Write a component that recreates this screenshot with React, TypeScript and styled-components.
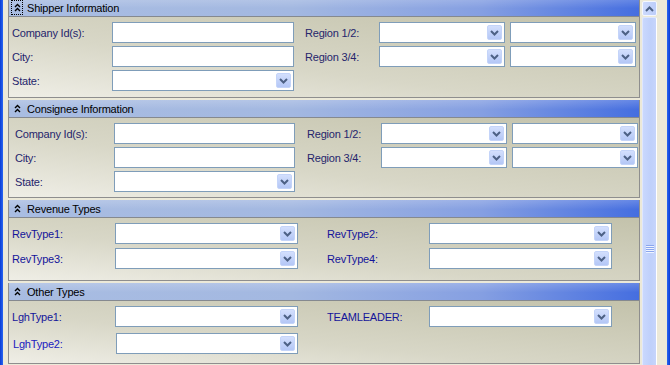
import React from "react";
import styled, { createGlobalStyle } from "styled-components";

const GlobalStyle = createGlobalStyle`
  html, body {
    margin: 0;
    padding: 0;
    background: #ece9d8;
  }
  body {
    font-family: "Liberation Sans", Arial, sans-serif;
  }
`;

const Window = styled.div`
  width: 670px;
  height: 365px;
  overflow: hidden;
  display: flex;
  align-items: flex-start;
  background: #ece9d8;
`;

const FrameEdge = styled.div<{ $side: "left" | "right" }>`
  width: 3px;
  height: 365px;
  flex: none;
  margin-left: ${(p) => (p.$side === "right" ? "auto" : "0")};
  background: ${(p) =>
    p.$side === "left"
      ? "linear-gradient(to right, #0a3cd4, #2a66f2)"
      : "linear-gradient(to right, #2a66f2, #0a3cd4)"};
`;

const Panels = styled.div`
  width: 632px;
  margin-left: 5px;
  flex: none;
  display: flex;
  flex-direction: column;
`;

const SectionBox = styled.section`
  box-sizing: border-box;
  border: 1px solid #8e8e8e;
  border-top: none;
  margin-bottom: 2px;

  &:first-child {
    margin-top: -1px;
  }
`;

const SectionHeader = styled.div`
  height: 18px;
  box-sizing: border-box;
  border-bottom: 1px solid #85898f;
  display: flex;
  align-items: center;
  padding-left: 2px;
  font-size: 11px;
  letter-spacing: -0.2px;
  color: #000;
  background: linear-gradient(
      to bottom,
      rgba(255, 255, 255, 0.18) 0%,
      rgba(255, 255, 255, 0) 55%
    ),
    linear-gradient(
      to right,
      #a9bde2 0%,
      #a3b8e1 45%,
      #859fe2 75%,
      #456ee0 100%
    );
`;

const Toggle = styled.span<{ $focused?: boolean }>`
  width: 12px;
  height: 15px;
  box-sizing: border-box;
  border: 1px dotted ${(p) => (p.$focused ? "#000" : "transparent")};
  display: flex;
  align-items: center;
  justify-content: center;
  margin-right: 4px;
`;

const SectionBody = styled.div<{ $height: number }>`
  height: ${(p) => p.$height}px;
  box-sizing: border-box;
  padding-top: 5px;
  display: flex;
  align-items: flex-start;
  background: linear-gradient(
    to top right,
    #efeee6 0%,
    #d8d7c7 40%,
    #c3c2ab 100%
  );
`;

const FieldGrid = styled.div<{ $cols: string; $rowGap: number; $offset: number }>`
  display: grid;
  grid-template-columns: ${(p) => p.$cols};
  grid-auto-rows: 21px;
  column-gap: 5px;
  row-gap: ${(p) => p.$rowGap}px;
  margin-left: ${(p) => p.$offset}px;
`;

type Tone = "navy" | "blue" | "bright";

const toneColor: Record<Tone, string> = {
  navy: "#25256c",
  blue: "#14149a",
  bright: "#2020c0",
};

const Label = styled.label<{ $tone: Tone; $nudge?: number }>`
  display: flex;
  align-items: center;
  white-space: nowrap;
  font-size: 11px;
  letter-spacing: -0.2px;
  color: ${(p) => toneColor[p.$tone]};
  padding-left: ${(p) => p.$nudge ?? 0}px;
`;

const TextBox = styled.div`
  box-sizing: border-box;
  height: 21px;
  border: 1px solid #7f9db9;
  background: #fff;
`;

const Combo = styled.div<{ $nudge?: number }>`
  box-sizing: border-box;
  height: 21px;
  border: 1px solid #7f9db9;
  background: #fff;
  display: flex;
  align-items: center;
  justify-content: flex-end;
  padding-right: 2px;
  margin-left: ${(p) => p.$nudge ?? 0}px;
`;

const DropButton = styled.span`
  width: 15px;
  height: 15px;
  box-sizing: border-box;
  border: 1px solid #c4d4f9;
  border-radius: 2px;
  background: linear-gradient(to bottom, #d3dffd, #b4c7f6);
  display: flex;
  align-items: center;
  justify-content: center;
`;

const ScrollBar = styled.div`
  width: 15px;
  flex: none;
  margin-left: 2px;
  padding-top: 1px;
  display: flex;
  flex-direction: column;
  gap: 1px;
`;

const ScrollButton = styled.div`
  height: 15px;
  box-sizing: border-box;
  border: 1px solid #f4f7ff;
  border-radius: 2px;
  background: linear-gradient(to right, #cddafd, #bccdfa);
  display: flex;
  align-items: center;
  justify-content: center;
`;

const Thumb = styled.div`
  height: 464px;
  box-sizing: border-box;
  border: 1px solid #dfe7fe;
  border-right-color: #ffffff;
  border-radius: 2px;
  background: linear-gradient(to right, #c9d8fd, #bfd0fb 60%, #c6d5fc);
  display: flex;
  align-items: center;
  justify-content: center;
`;

const Grip = styled.span`
  width: 8px;
  height: 8px;
  background: repeating-linear-gradient(
    to bottom,
    #8ba6ee 0,
    #8ba6ee 1px,
    #eef3ff 1px,
    #eef3ff 2px
  );
`;

const Chevron = ({ up }: { up?: boolean }) => (
  <svg width="9" height="6" viewBox="0 0 9 6">
    <polyline
      points={up ? "1,5 4.5,1.5 8,5" : "1,1 4.5,4.5 8,1"}
      fill="none"
      stroke="#4d6185"
      strokeWidth="2"
    />
  </svg>
);

const CollapseIcon = () => (
  <svg width="7" height="9" viewBox="0 0 7 9">
    <polyline points="1,4 3.5,1.5 6,4" fill="none" stroke="#000" strokeWidth="1.4" />
    <polyline points="1,8 3.5,5.5 6,8" fill="none" stroke="#000" strokeWidth="1.4" />
  </svg>
);

type Field = "text" | "combo";
type Row = { label: string; fields: Field[]; tone?: Tone; nudge?: number };
type Group = { offset: number; cols: string; rows: Row[] };
type Section = {
  title: string;
  focused?: boolean;
  height: number;
  rowGap: number;
  tone: Tone;
  groups: Group[];
};

const sections: Section[] = [
  {
    title: "Shipper Information",
    focused: true,
    height: 80,
    rowGap: 3,
    tone: "navy",
    groups: [
      {
        offset: 3,
        cols: "95px 182px",
        rows: [
          { label: "Company Id(s):", fields: ["text"] },
          { label: "City:", fields: ["text"] },
          { label: "State:", fields: ["combo"] },
        ],
      },
      {
        offset: 11,
        cols: "69px 126px 126px",
        rows: [
          { label: "Region 1/2:", fields: ["combo", "combo"] },
          { label: "Region 3/4:", fields: ["combo", "combo"] },
        ],
      },
    ],
  },
  {
    title: "Consignee Information",
    height: 79,
    rowGap: 3,
    tone: "navy",
    groups: [
      {
        offset: 6,
        cols: "94px 181px",
        rows: [
          { label: "Company Id(s):", fields: ["text"] },
          { label: "City:", fields: ["text"] },
          { label: "State:", fields: ["combo"] },
        ],
      },
      {
        offset: 12,
        cols: "69px 126px 126px",
        rows: [
          { label: "Region 1/2:", fields: ["combo", "combo"] },
          { label: "Region 3/4:", fields: ["combo", "combo"] },
        ],
      },
    ],
  },
  {
    title: "Revenue Types",
    height: 62,
    rowGap: 4,
    tone: "blue",
    groups: [
      {
        offset: 3,
        cols: "98px 183px",
        rows: [
          { label: "RevType1:", fields: ["combo"] },
          { label: "RevType3:", fields: ["combo"] },
        ],
      },
      {
        offset: 29,
        cols: "97px 183px",
        rows: [
          { label: "RevType2:", fields: ["combo"] },
          { label: "RevType4:", fields: ["combo"] },
        ],
      },
    ],
  },
  {
    title: "Other Types",
    height: 62,
    rowGap: 6,
    tone: "blue",
    groups: [
      {
        offset: 3,
        cols: "98px 183px",
        rows: [
          { label: "LghType1:", fields: ["combo"] },
          { label: "LghType2:", fields: ["combo"], tone: "bright", nudge: 1 },
        ],
      },
      {
        offset: 29,
        cols: "97px 183px",
        rows: [{ label: "TEAMLEADER:", fields: ["combo"] }],
      },
    ],
  },
];

function FieldBox({ kind, nudge }: { kind: Field; nudge?: number }) {
  if (kind === "text") return <TextBox />;
  return (
    <Combo $nudge={nudge}>
      <DropButton>
        <Chevron />
      </DropButton>
    </Combo>
  );
}

function FormSection({ section }: { section: Section }) {
  return (
    <SectionBox>
      <SectionHeader>
        <Toggle $focused={section.focused}>
          <CollapseIcon />
        </Toggle>
        {section.title}
      </SectionHeader>
      <SectionBody $height={section.height}>
        {section.groups.map((group, gi) => (
          <FieldGrid key={gi} $cols={group.cols} $rowGap={section.rowGap} $offset={group.offset}>
            {group.rows.map((row) => (
              <React.Fragment key={row.label}>
                <Label $tone={row.tone ?? section.tone} $nudge={row.nudge}>
                  {row.label}
                </Label>
                {row.fields.map((f, fi) => (
                  <FieldBox key={fi} kind={f} nudge={row.nudge} />
                ))}
              </React.Fragment>
            ))}
          </FieldGrid>
        ))}
      </SectionBody>
    </SectionBox>
  );
}

export default function App() {
  return (
    <>
      <GlobalStyle />
      <Window>
        <FrameEdge $side="left" />
        <Panels>
          {sections.map((s) => (
            <FormSection key={s.title} section={s} />
          ))}
        </Panels>
        <ScrollBar>
          <ScrollButton>
            <Chevron up />
          </ScrollButton>
          <Thumb>
            <Grip />
          </Thumb>
        </ScrollBar>
        <FrameEdge $side="right" />
      </Window>
    </>
  );
}
